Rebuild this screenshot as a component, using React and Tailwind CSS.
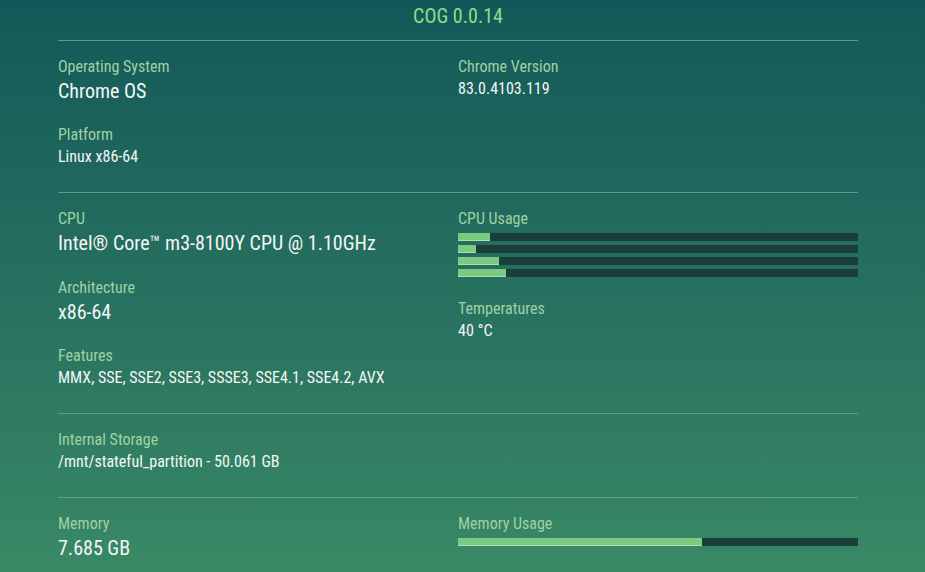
import React from 'react';

const cpuLoads = [8, 4.5, 10.2, 12];

const Label = ({ children }) => (
  <div className="text-[16px] leading-[20px] text-[#9fd2a4]">{children}</div>
);

const Big = ({ children }) => (
  <div className="mt-[2px] text-[20px] leading-[24px] text-[#f2f7f4]">{children}</div>
);

const Small = ({ children }) => (
  <div className="mt-[2px] text-[16px] leading-[20px] text-[#f2f7f4]">{children}</div>
);

const Bar = ({ value }) => (
  <div className="h-[8px] w-full bg-[#1a3f3a]">
    <div
      className="h-full bg-[#7bc983] border-b border-[#a9e2aa]"
      style={{ width: `${value}%` }}
    />
  </div>
);

const Section = ({ children }) => (
  <div className="grid grid-cols-2 border-t border-[#5f9a8a] pt-[16px] pb-[25px]">
    {children}
  </div>
);

const App = () => {
  return (
    <div
      className="min-h-[572px] w-full bg-gradient-to-b from-[#135858] to-[#3a8a66]"
      style={{ fontFamily: '"Roboto Condensed", Roboto, sans-serif' }}
    >
      <div className="ml-[58px] w-[800px]">
        <div className="pt-[4px] pb-[12px] text-center text-[20px] leading-[24px] text-[#86e08e]">
          COG 0.0.14
        </div>

        <Section>
          <div className="flex flex-col">
            <div className="mb-[22px]">
              <Label>Operating System</Label>
              <Big>Chrome OS</Big>
            </div>
            <div>
              <Label>Platform</Label>
              <Small>Linux x86-64</Small>
            </div>
          </div>
          <div>
            <Label>Chrome Version</Label>
            <Small>83.0.4103.119</Small>
          </div>
        </Section>

        <Section>
          <div className="flex flex-col">
            <div className="mb-[23px]">
              <Label>CPU</Label>
              <Big>Intel® Core™ m3-8100Y CPU @ 1.10GHz</Big>
            </div>
            <div className="mb-[22px]">
              <Label>Architecture</Label>
              <Big>x86-64</Big>
            </div>
            <div>
              <Label>Features</Label>
              <Small>MMX, SSE, SSE2, SSE3, SSSE3, SSE4.1, SSE4.2, AVX</Small>
            </div>
          </div>
          <div className="flex flex-col">
            <div className="mb-[22px]">
              <Label>CPU Usage</Label>
              <div className="mt-[4px] flex flex-col gap-[4px]">
                {cpuLoads.map((v, i) => (
                  <Bar key={i} value={v} />
                ))}
              </div>
            </div>
            <div>
              <Label>Temperatures</Label>
              <Small>40 °C</Small>
            </div>
          </div>
        </Section>

        <Section>
          <div>
            <Label>Internal Storage</Label>
            <Small>/mnt/stateful_partition - 50.061 GB</Small>
          </div>
        </Section>

        <Section>
          <div>
            <Label>Memory</Label>
            <Big>7.685 GB</Big>
          </div>
          <div>
            <Label>Memory Usage</Label>
            <div className="mt-[4px]">
              <Bar value={61} />
            </div>
          </div>
        </Section>
      </div>
    </div>
  );
};

export default App;
